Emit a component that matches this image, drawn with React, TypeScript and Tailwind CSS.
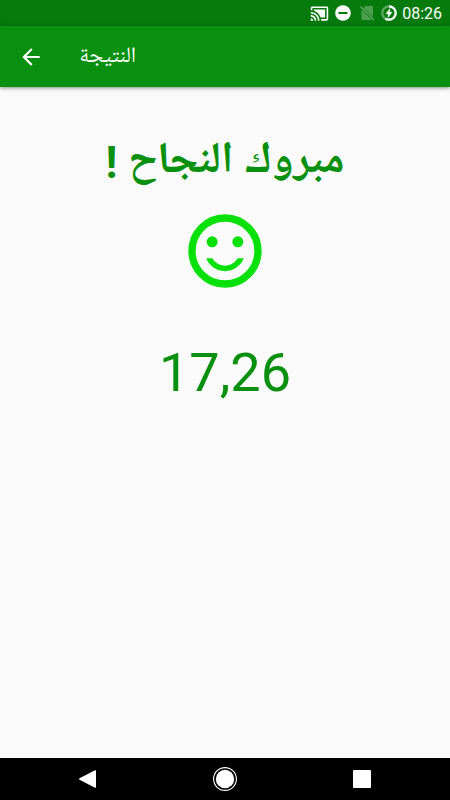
import { ReactNode } from 'react';

const resultat = {
  title: 'النتيجة',
  message: 'مبروك النجاح !',
  moyenne: '17,26',
};

function StatusBar() {
  return (
    <div className="flex h-[26px] items-center justify-end bg-[#077a0d] pr-2 text-white">
      {/* cast */}
      <svg viewBox="0 0 24 24" className="mr-1.5 size-[19px]" fill="currentColor" aria-hidden="true">
        <path d="M21 3H3c-1.100 0-2 .9-2 2v3h2V5h18v14h-7v2h7c1.100 0 2-.9 2-2V5c0-1.100-.9-2-2-2zM1 18v3h3c0-1.660-1.340-3-3-3zm0-4v2c2.760 0 5 2.240 5 5h2c0-3.870-3.130-7-7-7zm18-7H5v1.630c3.960 1.280 7.090 4.410 8.370 8.370H19V7zM1 10v2c4.970 0 9 4.030 9 9h2c0-6.080-4.930-11-11-11z" />
      </svg>
      {/* do not disturb */}
      <svg viewBox="0 0 16 16" className="mr-2 size-4" aria-hidden="true">
        <circle cx="8" cy="8" r="7.800" fill="#fff" />
        <rect x="3.500" y="7" width="9" height="2" fill="#077a0d" />
      </svg>
      {/* no sim */}
      <svg viewBox="0 0 16 16" className="mr-1.5 size-4" aria-hidden="true">
        <path d="M6.500 1H13a1 1 0 0 1 1 1v10.200L4.300 3.200z M2.500 4.600 13.200 15H3.500a1 1 0 0 1-1-1z" fill="#4d9f50" />
        <path d="M1.500 1.500 14.800 14.800" stroke="#077a0d" strokeWidth="2.400" />
        <path d="M1.500 1.500 14.800 14.800" stroke="#6fb072" strokeWidth="1.200" />
      </svg>
      {/* battery */}
      <svg viewBox="0 0 16 16" className="mr-[5px] size-4" fill="none" aria-hidden="true">
        <circle cx="8" cy="8" r="6.700" stroke="#5fac63" strokeWidth="2.200" />
        <path d="M8 1.300a6.700 6.700 0 0 1 0 13.400 6.700 6.700 0 0 1-3.600-1" stroke="#fff" strokeWidth="2.200" />
        <path d="M9 3.500 5 8.700h2.400L7 12.500l4-5.200H8.600z" fill="#fff" stroke="#fff" strokeWidth=".5" />
      </svg>
      <span className="pt-0.5 text-base leading-none">08:26</span>
    </div>
  );
}

function AppBar({ title }: { title: string }) {
  return (
    <header className="relative flex h-[61px] items-center bg-[#0a900f] pl-[18px] text-white shadow-[0_1px_4px_rgba(0,0,0,0.45)]">
      <button type="button" aria-label="رجوع" className="mr-[35px]">
        <svg viewBox="0 0 24 24" className="size-[26px]" fill="currentColor" aria-hidden="true">
          <path d="M20 11H7.830l5.590-5.590L12 4l-8 8 8 8 1.410-1.410L7.830 13H20v-2z" />
        </svg>
      </button>
      <h1 dir="rtl" className="pt-0.5 text-[22px] leading-7">
        {title}
      </h1>
    </header>
  );
}

function Smiley() {
  return (
    <svg viewBox="0 0 24 24" className="size-[88px]" role="img" aria-label="ناجح">
      <circle cx="12" cy="12" r="9" fill="none" stroke="#08e00a" strokeWidth="2" />
      <g fill="#08e00a">
        <circle cx="8.500" cy="9.500" r="1.500" />
        <circle cx="15.500" cy="9.500" r="1.500" />
        <path d="M12 16c-1.480 0-2.750-.81-3.450-2H6.880c.8 2.050 2.790 3.500 5.120 3.500s4.320-1.450 5.120-3.500h-1.670c-.7 1.190-1.970 2-3.450 2z" />
      </g>
    </svg>
  );
}

function NavButton({ label, children }: { label: string; children: ReactNode }) {
  return (
    <button type="button" aria-label={label} className="flex h-full flex-1 items-center justify-center">
      <svg viewBox="0 0 24 24" className="size-6" fill="#fff" aria-hidden="true">
        {children}
      </svg>
    </button>
  );
}

function NavBar() {
  return (
    <nav className="flex h-[42px] bg-black px-[19px]">
      <NavButton label="Back">
        <path d="M3.500 11.200 19 3.200a.8.8 0 0 1 1 .8v16a.8.8 0 0 1-1 .8L3.500 12.800a1 1 0 0 1 0-1.600z" />
      </NavButton>
      <NavButton label="Home">
        <circle cx="12" cy="12" r="9.200" />
        <circle cx="12" cy="12" r="11.400" fill="none" stroke="#fff" strokeWidth="1.100" />
      </NavButton>
      <NavButton label="Recents">
        <rect x="3" y="3" width="18" height="18" rx="1" />
      </NavButton>
    </nav>
  );
}

export default function App() {
  return (
    <div className="flex min-h-screen flex-col bg-[#fafafa] font-[Roboto,'Noto_Naskh_Arabic_UI','Noto_Sans_Arabic','DejaVu_Sans',sans-serif]">
      <StatusBar />
      <AppBar title={resultat.title} />
      <main className="flex flex-1 flex-col items-center pt-[52px] text-[#0a900f]">
        <h2 dir="rtl" className="text-[44px] leading-[48px] font-bold">
          {resultat.message}
        </h2>
        <div className="mt-5">
          <Smiley />
        </div>
        <p className="mt-[46px] text-[54px] leading-[64px]">{resultat.moyenne}</p>
      </main>
      <NavBar />
    </div>
  );
}
